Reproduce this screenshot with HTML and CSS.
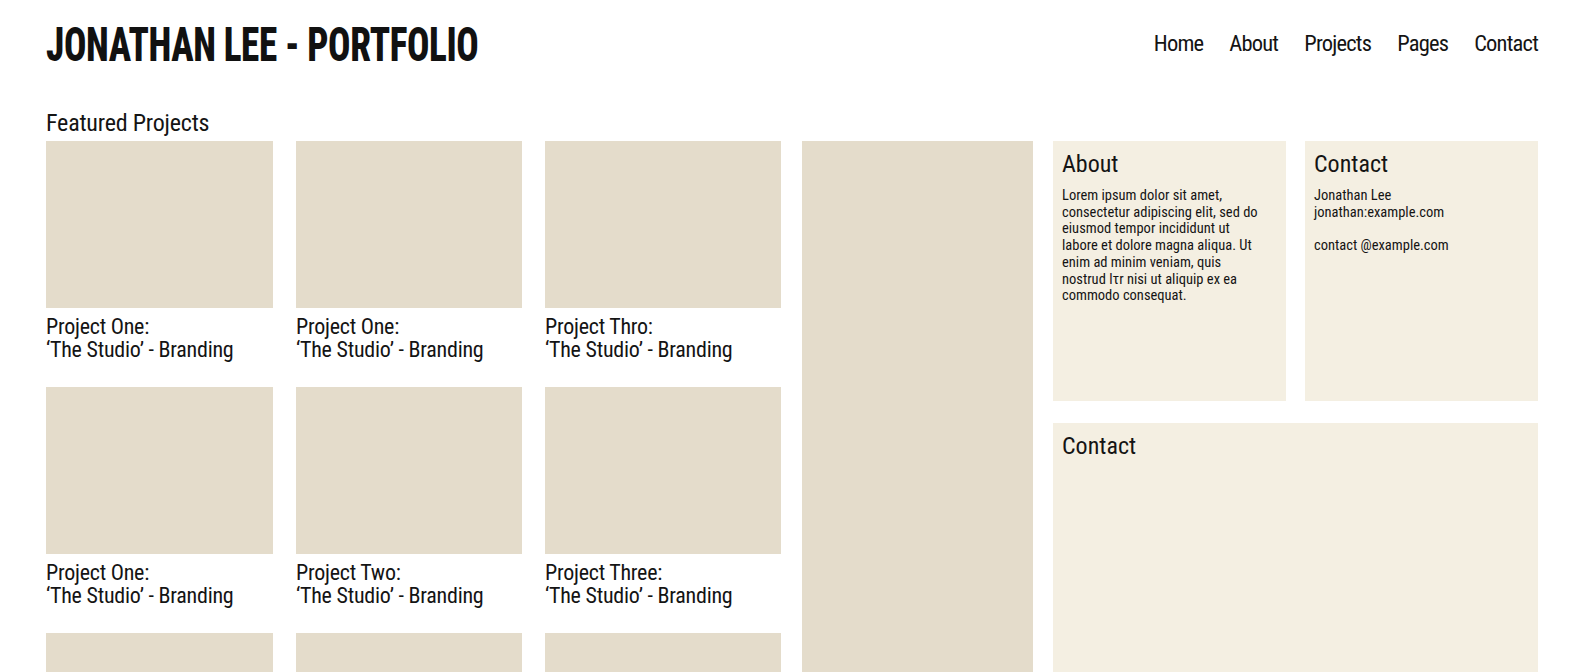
FILE: index.html
```html
<!DOCTYPE html>
<html lang="en">
<head>
<meta charset="utf-8">
<title>Jonathan Lee - Portfolio</title>
<link rel="stylesheet" href="styles.css">
</head>
<body>
<div class="page">
  <header class="header">
    <h1 class="title">JONATHAN LEE - PORTFOLIO</h1>
    <nav class="nav">
      <a href="#">Home</a>
      <a href="#">About</a>
      <a href="#">Projects</a>
      <a href="#">Pages</a>
      <a href="#">Contact</a>
    </nav>
  </header>
  <h2 class="section-title">Featured Projects</h2>
  <main class="layout">
    <section class="projects">
      <div class="card"><div class="thumb"></div><p class="caption">Project One:<br>‘The Studio’ - Branding</p></div>
      <div class="card"><div class="thumb"></div><p class="caption">Project One:<br>‘The Studio’ - Branding</p></div>
      <div class="card"><div class="thumb"></div><p class="caption">Project Thro:<br>‘The Studio’ - Branding</p></div>
      <div class="card"><div class="thumb"></div><p class="caption">Project One:<br>‘The Studio’ - Branding</p></div>
      <div class="card"><div class="thumb"></div><p class="caption">Project Two:<br>‘The Studio’ - Branding</p></div>
      <div class="card"><div class="thumb"></div><p class="caption">Project Three:<br>‘The Studio’ - Branding</p></div>
      <div class="card"><div class="thumb"></div></div>
      <div class="card"><div class="thumb"></div></div>
      <div class="card"><div class="thumb"></div></div>
    </section>
    <div class="tall"></div>
    <aside class="side">
      <div class="panel">
        <h3 class="panel-title">About</h3>
        <p class="panel-text">Lorem ipsum dolor sit amet,<br>consectetur adipiscing elit, sed do<br>eiusmod tempor incididunt ut<br>labore et dolore magna aliqua. Ut<br>enim ad minim veniam, quis<br>nostrud lτr nisi ut aliquip ex ea<br>commodo consequat.</p>
      </div>
      <div class="panel">
        <h3 class="panel-title">Contact</h3>
        <p class="panel-text">Jonathan Lee<br>jonathan:example.com<br><br>contact @example.com</p>
      </div>
      <div class="panel panel-wide">
        <h3 class="panel-title">Contact</h3>
      </div>
    </aside>
  </main>
</div>
</body>
</html>
```
FILE: styles.css
```css
* { box-sizing: border-box; }
html, body { margin: 0; padding: 0; background: #ffffff; }
body {
  font-family: "Roboto Condensed", Roboto, "Liberation Sans", sans-serif;
  font-stretch: 75%;
  color: #141414;
  height: 672px;
  overflow: hidden;
}
.page { padding: 0 46px; }
.header {
  display: flex;
  justify-content: space-between;
  align-items: center;
  height: 90px;
}
.title {
  margin: 0;
  font-size: 48px;
  font-weight: 800;
  line-height: 1;
  letter-spacing: -0.5px;
  color: #111;
  transform: scaleX(0.775);
  transform-origin: left center;
  white-space: nowrap;
}
.nav { display: flex; gap: 26px; margin-top: -4px; }
.nav a {
  color: #141414;
  text-decoration: none;
  font-size: 22.5px;
  line-height: 1;
  letter-spacing: -0.8px;
}
.section-title {
  margin: 15px 0 0;
  font-size: 24px;
  font-weight: 400;
  line-height: 36px;
  letter-spacing: -0.2px;
}
.layout {
  display: grid;
  grid-template-columns: 735px 231px 485px;
  column-gap: 20.5px;
  align-items: start;
}
.projects {
  display: grid;
  grid-template-columns: 227px 226px 236px;
  column-gap: 23px;
  row-gap: 26px;
}
.thumb { height: 167px; background: #e4dccb; }
.caption {
  margin: 7px 0 0;
  font-size: 22px;
  line-height: 23px;
  letter-spacing: -0.25px;
}
.tall { height: 600px; background: #e4dccb; }
.side {
  display: grid;
  grid-template-columns: 233px 233px;
  grid-template-rows: 260px 300px;
  column-gap: 19px;
  row-gap: 22px;
}
.panel { background: #f4efe2; padding: 8px 9px; }
.panel-wide { grid-column: 1 / 3; }
.panel-title {
  margin: 0;
  font-size: 24px;
  font-weight: 400;
  line-height: 30px;
}
.panel-text {
  margin: 9px 0 0;
  font-size: 14.5px;
  line-height: 16.7px;
}
```
